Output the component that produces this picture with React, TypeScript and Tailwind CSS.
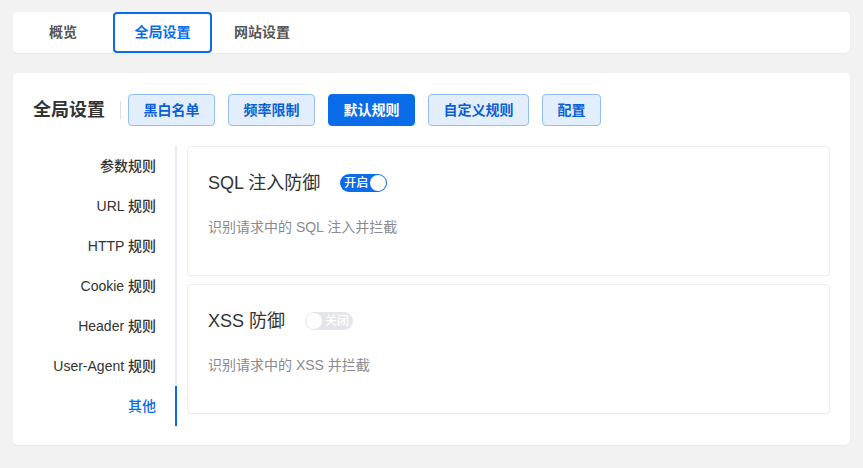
import React from "react";

const FONT = { fontFamily: '"Liberation Sans", "Noto Sans CJK SC", sans-serif' };

function Toggle({ on, label }: { on: boolean; label: string }) {
  if (on) {
    return (
      <div className="flex items-center h-[18px] w-[47px] rounded-full bg-[#0a6ce9] pl-[4px] pr-[1px]">
        <span className="text-[12px] leading-none text-white font-medium">{label}</span>
        <span className="ml-auto h-[16px] w-[16px] rounded-full bg-white" />
      </div>
    );
  }
  return (
    <div className="flex items-center h-[18px] w-[48px] rounded-full bg-[#e3e5ea] pl-[1px] pr-[4px]">
      <span className="h-[16px] w-[16px] rounded-full bg-white" />
      <span className="ml-auto text-[12px] leading-none text-white font-medium">{label}</span>
    </div>
  );
}

function RuleCard({ title, desc, on, label }: { title: string; desc: string; on: boolean; label: string }) {
  return (
    <div className="h-[130px] rounded-[4px] border border-[#eceef1] bg-white px-5 pt-[23px] shadow-[0_1px_2px_rgba(0,0,0,0.03)]">
      <div className="flex items-center h-[26px]">
        <span className="text-[18px] leading-[26px] text-[#333]">{title}</span>
        <div className="ml-5">
          <Toggle on={on} label={label} />
        </div>
      </div>
      <div className="mt-[21px] text-[14px] leading-[20px] text-[#8a8a8f]">{desc}</div>
    </div>
  );
}

export default function App() {
  const tabs = ["概览", "全局设置", "网站设置"];
  const buttons = ["黑白名单", "频率限制", "默认规则", "自定义规则", "配置"];
  const side = ["参数规则", "URL 规则", "HTTP 规则", "Cookie 规则", "Header 规则", "User-Agent 规则", "其他"];
  return (
    <div style={FONT} className="w-[863px] min-h-[468px] bg-[#f2f2f3] px-[13px] pt-[12px]">
      <div className="flex h-[41px] rounded-[5px] bg-white shadow-[0_1px_2px_rgba(0,0,0,0.04)]">
        {tabs.map((t, i) =>
          i === 1 ? (
            <div
              key={t}
              className="flex w-[99px] items-center justify-center rounded-[4px] border-2 border-[#0a6ce9] text-[14px] font-bold text-[#0a6ce9]"
            >
              {t}
            </div>
          ) : (
            <div key={t} className="flex w-[100px] items-center justify-center text-[14px] font-bold text-[#555]">
              {t}
            </div>
          )
        )}
      </div>

      <div className="mt-[20px] rounded-[5px] bg-white px-5 pt-[21px] pb-[19px] shadow-[0_1px_2px_rgba(0,0,0,0.04)]">
        <div className="flex h-[32px] items-center">
          <span className="text-[18px] font-bold text-[#333]">全局设置</span>
          <span className="ml-[15px] mr-[7px] h-[18px] w-px bg-[#dddddd]" />
          <div className="flex gap-[13px]">
            {buttons.map((b, i) =>
              i === 2 ? (
                <div
                  key={b}
                  className="flex h-[32px] items-center rounded-[4px] border border-[#0a6ce9] bg-[#0a6ce9] px-[14.5px] text-[14px] font-bold text-white"
                >
                  {b}
                </div>
              ) : (
                <div
                  key={b}
                  className="flex h-[32px] items-center rounded-[4px] border border-[#93bff5] bg-[#e2eefc] px-[14.5px] text-[14px] font-bold text-[#0b5fd4]"
                >
                  {b}
                </div>
              )
            )}
          </div>
        </div>

        <div className="mt-[20px] flex">
          <div className="w-[144px] shrink-0">
            {side.map((s, i) => (
              <div
                key={s}
                className={
                  "flex h-[40px] items-center justify-end border-r-2 pr-[19px] text-[14px] font-medium " +
                  (i === side.length - 1 ? "border-[#0a6ce9] text-[#0a6ce9]" : "border-[#e8ebf0] text-[#333]")
                }
              >
                {s}
              </div>
            ))}
          </div>
          <div className="ml-[10px] flex flex-1 flex-col gap-[8px]">
            <RuleCard title="SQL 注入防御" desc="识别请求中的 SQL 注入并拦截" on={true} label="开启" />
            <RuleCard title="XSS 防御" desc="识别请求中的 XSS 并拦截" on={false} label="关闭" />
          </div>
        </div>
      </div>
    </div>
  );
}
